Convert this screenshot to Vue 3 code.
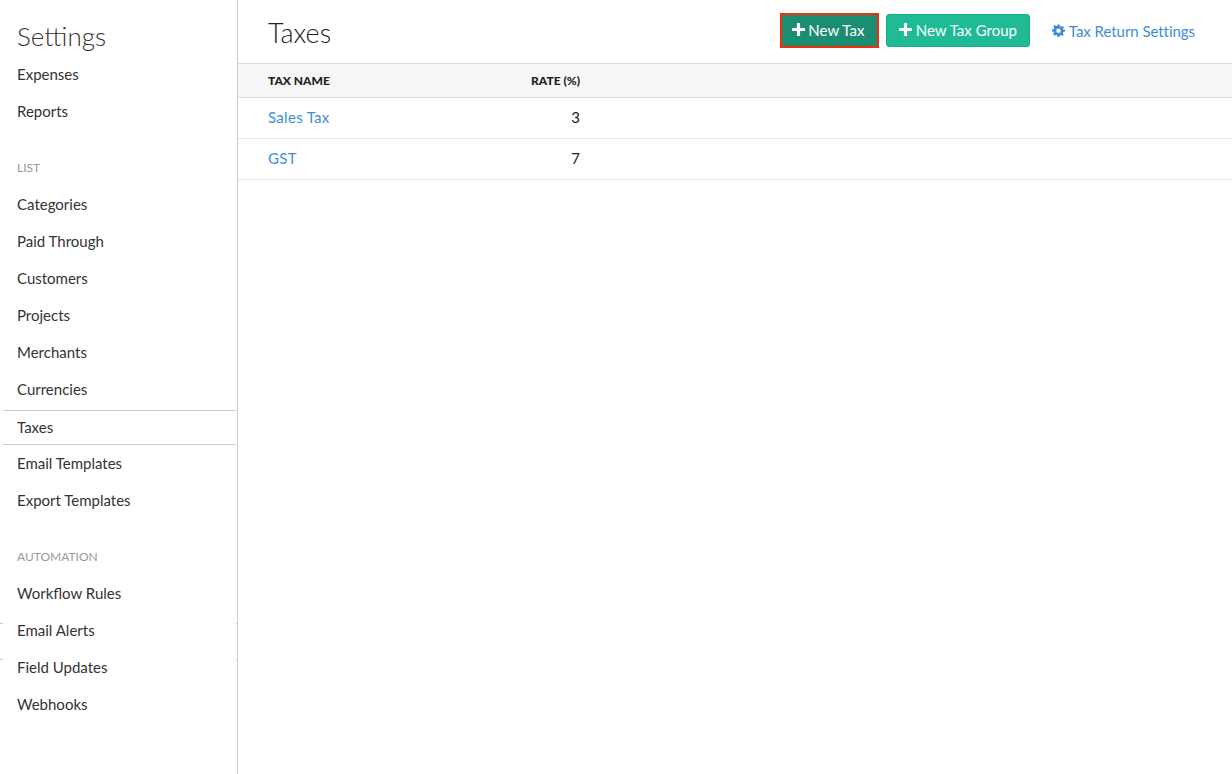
<script setup>
const top = ['Expenses', 'Reports']
const list = ['Categories', 'Paid Through', 'Customers', 'Projects', 'Merchants', 'Currencies', 'Taxes', 'Email Templates', 'Export Templates']
const auto = ['Workflow Rules', 'Email Alerts', 'Field Updates', 'Webhooks']
const taxes = [{ name: 'Sales Tax', rate: 3 }, { name: 'GST', rate: 7 }]
</script>

<template>
  <div class="page">
    <aside class="side">
      <h1 class="brand">Settings</h1>
      <a v-for="i in top" :key="i" class="item top">{{ i }}</a>
      <div class="label first">LIST</div>
      <a v-for="i in list" :key="i" class="item" :class="{ active: i === 'Taxes' }">{{ i }}</a>
      <div class="label second">AUTOMATION</div>
      <a v-for="i in auto" :key="i" class="item" :class="{ ticks: i === 'Email Alerts' }">{{ i }}</a>
    </aside>
    <main class="main">
      <header class="head">
        <h2 class="title">Taxes</h2>
        <div class="actions">
          <button class="btn primary">
            <svg class="plus" viewBox="0 0 14 14"><path d="M5.3 0h3.4v5.3H14v3.4H8.7V14H5.3V8.7H0V5.3h5.3z" /></svg>New Tax
          </button>
          <button class="btn group">
            <svg class="plus" viewBox="0 0 14 14"><path d="M5.3 0h3.4v5.3H14v3.4H8.7V14H5.3V8.7H0V5.3h5.3z" /></svg>New Tax Group
          </button>
          <a class="link">
            <svg class="gear" viewBox="0 0 24 24"><path fill-rule="evenodd" d="M10 1h4l.6 3.2 1.9.8 2.7-1.8 2.8 2.8-1.8 2.7.8 1.9L24 10v4l-3.2.6-.8 1.9 1.8 2.7-2.8 2.8-2.7-1.8-1.9.8L14 24h-4l-.6-3.2-1.9-.8-2.7 1.8-2.8-2.8 1.8-2.7-.8-1.9L0 14v-4l3.2-.6.8-1.9-1.8-2.7 2.8-2.8 2.7 1.8 1.9-.8zM12 8.2a4.1 4.1 0 1 0 0 8.2 4.1 4.1 0 0 0 0-8.2z" /></svg>Tax Return Settings
          </a>
        </div>
      </header>
      <div class="row thead"><span class="name">TAX NAME</span><span class="rate">RATE (%)</span></div>
      <div v-for="t in taxes" :key="t.name" class="row body">
        <a class="name link-text">{{ t.name }}</a><span class="rate">{{ t.rate }}</span>
      </div>
    </main>
  </div>
</template>

<style>
html, body { margin: 0; background: #fff; }
</style>

<style scoped>
.page { display: flex; height: 774px; overflow: hidden; font-family: Lato, "Liberation Sans", sans-serif; color: #222; background: #fff; }
.side { width: 234px; flex: none; border-right: 1px solid #ccc; padding-left: 3px; }
.brand { margin: 18px 0 2px 14px; height: 36px; font-size: 26px; line-height: 36px; font-weight: 300; color: #333; }
.item { position: relative; display: block; height: 37px; line-height: 35px; padding-left: 14px; font-size: 15px; color: #333; box-sizing: border-box; }
.item.top { line-height: 37px; }
.active { border-top: 1px solid #ccc; border-bottom: 1px solid #ccc; height: 35px; line-height: 33px; margin: 1px 1px 1px 0; }
.ticks::before, .ticks::after { content: ""; position: absolute; left: -3px; width: 237px; height: 1px; background: linear-gradient(to right, #ccc 3px, transparent 3px, transparent 236px, #ccc 236px); }
.ticks::before { top: 10px; }
.ticks::after { top: 46px; }
.label { padding-left: 14px; font-size: 12px; color: #999; line-height: 18px; }
.first { margin-top: 29px; margin-bottom: 10px; }
.second { margin-top: 28px; margin-bottom: 10px; }
.main { flex: 1; min-width: 0; }
.head { display: flex; align-items: center; justify-content: space-between; height: 63px; padding: 0 37px 0 30px; border-bottom: 1px solid #ddd; }
.title { margin: 1px 0 0; font-size: 27px; font-weight: 300; color: #222; }
.actions { display: flex; align-items: center; margin-bottom: 2px; }
.btn { display: flex; align-items: center; justify-content: center; height: 33px; width: 144px; padding: 0 0 2px; border: 1px solid #1bab89; border-radius: 3px; background: #1fbb96; color: #fff; font: 15px Lato, "Liberation Sans", sans-serif; }
.primary { width: 99px; height: 35px; margin-right: 7px; padding: 0 2px 2px 0; background: #1b8e72; border: 2px solid #f22c0c; border-radius: 0; }
.plus { width: 13px; height: 13px; margin-right: 3px; fill: #fff; }
.group .plus { margin-right: 4px; }
.link { display: flex; align-items: center; margin-left: 22px; font-size: 15px; letter-spacing: -0.05px; color: #408dd5; }
.gear { width: 13px; height: 13px; margin-right: 4px; fill: #408dd5; }
.row { display: flex; align-items: center; padding-left: 30px; box-sizing: border-box; border-bottom: 1px solid #e8e8e8; }
.name { width: 260px; }
.rate { width: 52px; text-align: right; }
.thead { height: 34px; background: #f6f6f6; border-bottom-color: #ddd; font-size: 12px; font-weight: 900; color: #222; }
.body { height: 41px; padding-bottom: 2px; font-size: 15px; }
.link-text { color: #408dd5; letter-spacing: 0.3px; }
</style>
